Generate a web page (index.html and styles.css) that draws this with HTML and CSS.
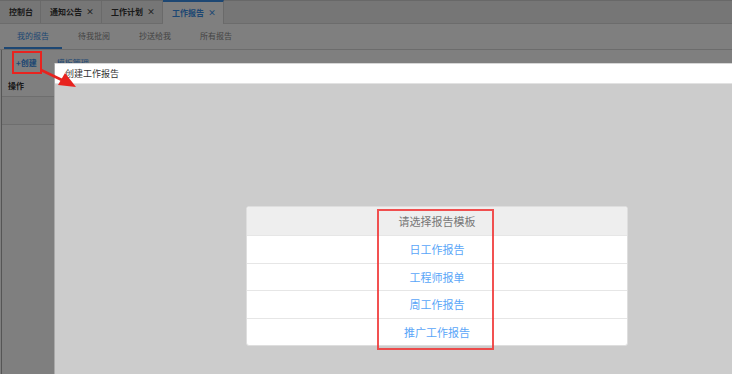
FILE: index.html
```html
<!DOCTYPE html>
<html lang="zh-CN">
<head>
<meta charset="utf-8">
<title>工作报告</title>
<link rel="stylesheet" href="styles.css">
</head>
<body>
<div class="page">
  <div class="tabs">
    <div class="tab">控制台</div>
    <div class="tab">通知公告<span class="x">×</span></div>
    <div class="tab">工作计划<span class="x">×</span></div>
    <div class="tab active">工作报告<span class="x">×</span></div>
  </div>
  <div class="subtabs">
    <div class="subtab active">我的报告</div>
    <div class="subtab">待我批阅</div>
    <div class="subtab">抄送给我</div>
    <div class="subtab">所有报告</div>
  </div>
  <div class="content">
    <div class="toolbar">
      <span class="tool create">+创建</span>
      <span class="tool">模板管理</span>
    </div>
    <div class="thead">操作</div>
    <div class="trow"></div>
  </div>
</div>

<div class="overlay"></div>

<div class="modal">
  <div class="modal-title">创建工作报告</div>
  <div class="modal-body">
    <div class="card">
      <div class="card-head">请选择报告模板</div>
      <div class="card-row"><a class="link">日工作报告</a></div>
      <div class="card-row"><a class="link">工程师报单</a></div>
      <div class="card-row"><a class="link">周工作报告</a></div>
      <div class="card-row"><a class="link">推广工作报告</a></div>
    </div>
  </div>
</div>

<div class="mark mark-create"></div>
<div class="mark mark-list"></div>
<svg class="arrow" width="90" height="100" viewBox="0 0 90 100">
  <line x1="41" y1="70" x2="64" y2="81" stroke="#e8231f" stroke-width="2.5"/>
  <polygon points="76,87 58,85 65,73" fill="#e8231f"/>
</svg>
</body>
</html>
```
FILE: styles.css
```css
* { box-sizing: border-box; }
html, body { margin: 0; padding: 0; }
body {
  width: 732px;
  height: 374px;
  overflow: hidden;
  font-family: "Noto Sans CJK SC", "Noto Sans", sans-serif;
  background: #fff;
  color: #555;
  position: relative;
}
.page { display: flex; flex-direction: column; height: 374px; }

.tabs {
  display: flex;
  height: 24px;
  background: #ececec;
  border-top: 1px solid #d0d0d0;
  border-bottom: 1px solid #d8d8d8;
}
.tab {
  font-size: 8px;
  font-weight: bold;
  line-height: 22px;
  padding: 0 7px 0 9px;
  border-right: 1px solid #d4d4d4;
  color: #333;
  display: flex;
  align-items: center;
  gap: 4px;
}
.tab .x { font-size: 8px; font-weight: bold; color: #444; }
.tab.active {
  background: #fff;
  color: #3a8ee6;
  border-top: 2px solid #3a8ee6;
  margin-top: -1px;
  padding-bottom: 1px;
  height: 24px;
}
.tab.active .x { color: #3a8ee6; }

.subtabs {
  display: flex;
  gap: 3px;
  height: 26px;
  padding-left: 4px;
  border-bottom: 1px solid #d8d8d8;
}
.subtab {
  font-size: 8px;
  line-height: 23px;
  padding: 0 13px;
  color: #888;
}
.subtab.active {
  color: #3a8ee6;
  border-bottom: 2px solid #3a8ee6;
}

.content {
  flex: 1;
  border-left: 1px solid #aaa;
  margin-left: 1px;
}
.toolbar {
  display: flex;
  gap: 20px;
  height: 25px;
  align-items: center;
  padding-left: 14px;
  font-size: 8px;
}
.tool { color: #3a8ee6; }
.create { font-weight: bold; }
.thead {
  height: 22px;
  line-height: 22px;
  padding-left: 6px;
  font-size: 8px;
  font-weight: bold;
  color: #333;
  border-bottom: 1px solid #ddd;
}
.trow {
  height: 28px;
  background: #f7f7f7;
  border-bottom: 1px solid #ddd;
}

.overlay {
  position: absolute;
  inset: 0;
  background: rgba(0, 0, 0, 0.5);
}

.modal {
  position: absolute;
  left: 54px;
  top: 63px;
  right: 0;
  bottom: 0;
  display: flex;
  flex-direction: column;
  border-left: 1px solid #a8a8a8;
}
.modal-title {
  height: 21px;
  background: #fff;
  border-top: 1px solid #d6d6d6;
  border-bottom: 1px solid #e2e2e2;
  font-size: 9px;
  line-height: 19px;
  padding-left: 10px;
  color: #333;
}
.modal-body {
  flex: 1;
  background: #cccccc;
  padding: 122px 0 0 191px;
}
.card {
  width: 382px;
  background: #fff;
  border: 1px solid #dedede;
  border-radius: 3px;
  overflow: hidden;
}
.card-head {
  height: 28px;
  line-height: 28px;
  background: #eeeeee;
  text-align: center;
  font-size: 11px;
  color: #777;
}
.card-row {
  height: 28px;
  line-height: 27px;
  text-align: center;
  border-top: 1px solid #e6e6e6;
  font-size: 11px;
}
.card-row:nth-child(2n+1) { height: 27px; line-height: 26px; }
.link { color: #5aa6f8; cursor: pointer; }

.mark {
  position: absolute;
  border: 2px solid #e8231f;
}
.mark-create { left: 12px; top: 51px; width: 30px; height: 23px; }
.mark-list {
  left: 377px; top: 209px; width: 117px; height: 141px;
  border-color: rgba(240, 50, 50, 0.85);
}
.arrow { position: absolute; left: 0; top: 0; }
```
